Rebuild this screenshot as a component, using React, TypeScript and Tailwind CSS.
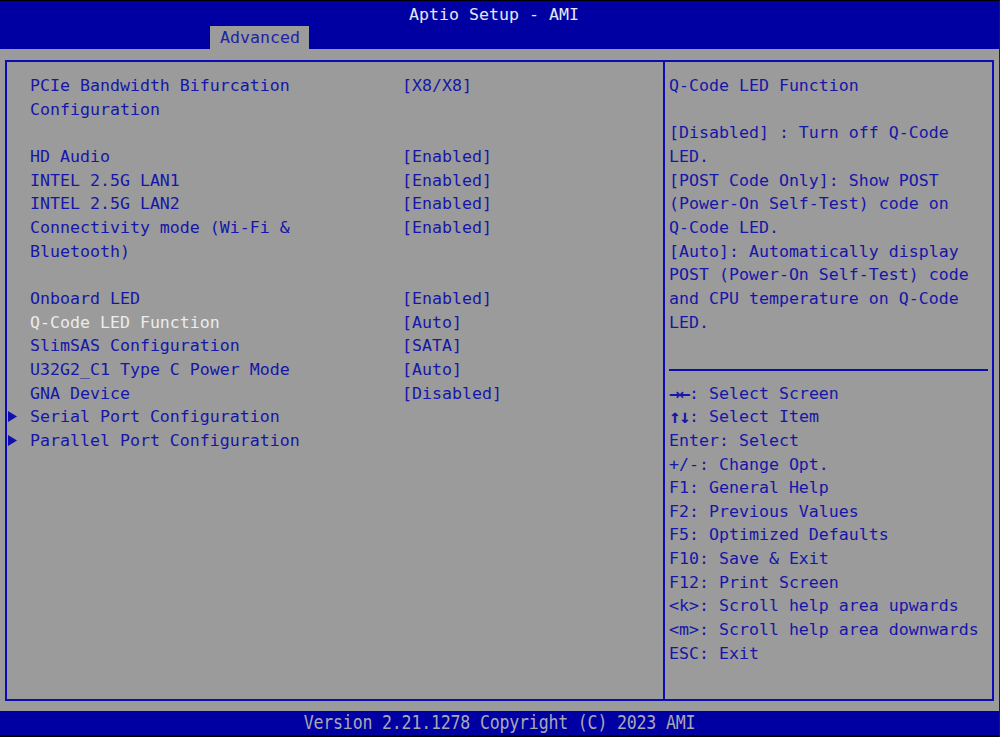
import React from 'react';

interface Row {
  label: string;
  value?: string;
  sub?: boolean;
  active?: boolean;
}

const rows: Row[] = [
  { label: 'PCIe Bandwidth Bifurcation', value: '[X8/X8]' },
  { label: 'Configuration' },
  { label: '' },
  { label: 'HD Audio', value: '[Enabled]' },
  { label: 'INTEL 2.5G LAN1', value: '[Enabled]' },
  { label: 'INTEL 2.5G LAN2', value: '[Enabled]' },
  { label: 'Connectivity mode (Wi-Fi &', value: '[Enabled]' },
  { label: 'Bluetooth)' },
  { label: '' },
  { label: 'Onboard LED', value: '[Enabled]' },
  { label: 'Q-Code LED Function', value: '[Auto]', active: true },
  { label: 'SlimSAS Configuration', value: '[SATA]' },
  { label: 'U32G2_C1 Type C Power Mode', value: '[Auto]' },
  { label: 'GNA Device', value: '[Disabled]' },
  { label: 'Serial Port Configuration', sub: true },
  { label: 'Parallel Port Configuration', sub: true },
];

const helpTop = [
  'Q-Code LED Function',
  '',
  '[Disabled] : Turn off Q-Code',
  'LED.',
  '[POST Code Only]: Show POST',
  '(Power-On Self-Test) code on',
  'Q-Code LED.',
  '[Auto]: Automatically display',
  'POST (Power-On Self-Test) code',
  'and CPU temperature on Q-Code',
  'LED.',
  '',
];

const keys: [string, string][] = [
  ['→←', ': Select Screen'],
  ['↑↓', ': Select Item'],
  ['', 'Enter: Select'],
  ['', '+/-: Change Opt.'],
  ['', 'F1: General Help'],
  ['', 'F2: Previous Values'],
  ['', 'F5: Optimized Defaults'],
  ['', 'F10: Save & Exit'],
  ['', 'F12: Print Screen'],
  ['', '<k>: Scroll help area upwards'],
  ['', '<m>: Scroll help area downwards'],
  ['', 'ESC: Exit'],
];

const Arrow = () => (
  <svg width="9" height="11" viewBox="0 0 9 11" className="mt-[6px] ml-[1px]">
    <path d="M0 0 L9 5.5 L0 11 Z" fill="#1010b0" />
  </svg>
);

export default function App() {
  return (
    <div
      className="w-[1000px] h-[737px] flex flex-col bg-black border-t border-black border-r border-r-[#202020] text-[16.6px] leading-[23.67px] overflow-hidden"
      style={{ fontFamily: '"DejaVu Sans Mono", "Liberation Mono", monospace' }}
    >
      {/* header */}
      <div className="h-[48px] bg-[#0000a2] flex flex-col">
        <div className="h-[25px] flex justify-center items-center pt-[2px] pr-[11px] text-[#e6e6f0]">
          Aptio Setup - AMI
        </div>
        <div className="flex-1 flex pl-[210px]">
          <div className="w-[99px] bg-[#9b9b9b] text-[#2222a6] px-[10px] leading-[23px]">Advanced</div>
        </div>
      </div>

      {/* body */}
      <div className="h-[662px] bg-[#9b9b9b] pt-[11px] pl-[5px] pr-[5px]">
        <div className="h-[641px] border-2 border-[#0c0cb4] flex text-[#1616a8]">
          <div className="w-[656px] pt-[12px]">
            {rows.map((r, i) => (
              <div key={i} className="flex h-[23.67px]">
                <div className="w-[23px] shrink-0">{r.sub && <Arrow />}</div>
                <div className={`w-[372px] whitespace-pre ${r.active ? 'text-[#ececec]' : ''}`}>{r.label}</div>
                <div className="whitespace-pre">{r.value}</div>
              </div>
            ))}
          </div>
          <div className="w-[2px] bg-[#0c0cb4]" />
          <div className="flex-1 pt-[12px] pl-[4px] pr-[4px]">
            {helpTop.map((t, i) => (
              <div key={i} className="h-[23.67px] whitespace-pre">{t}</div>
            ))}
            <div className="h-[23.67px] flex items-center">
              <div className="h-[2px] w-full bg-[#0c0cb4]" />
            </div>
            {keys.map(([k, t], i) => (
              <div key={i} className="h-[23.67px] whitespace-pre flex">
                {k && (
                  <span className="font-bold text-[19px] w-[20px] tracking-[-1.5px] leading-[22px]">{k}</span>
                )}
                <span>{t}</span>
              </div>
            ))}
          </div>
        </div>
      </div>

      {/* footer */}
      <div className="h-[24px] bg-[#0000a2] flex justify-center items-center text-[#a8a8b4]">
        <span className="scale-y-[1.15] tracking-[-0.2px]">Version 2.21.1278 Copyright (C) 2023 AMI</span>
      </div>
    </div>
  );
}
